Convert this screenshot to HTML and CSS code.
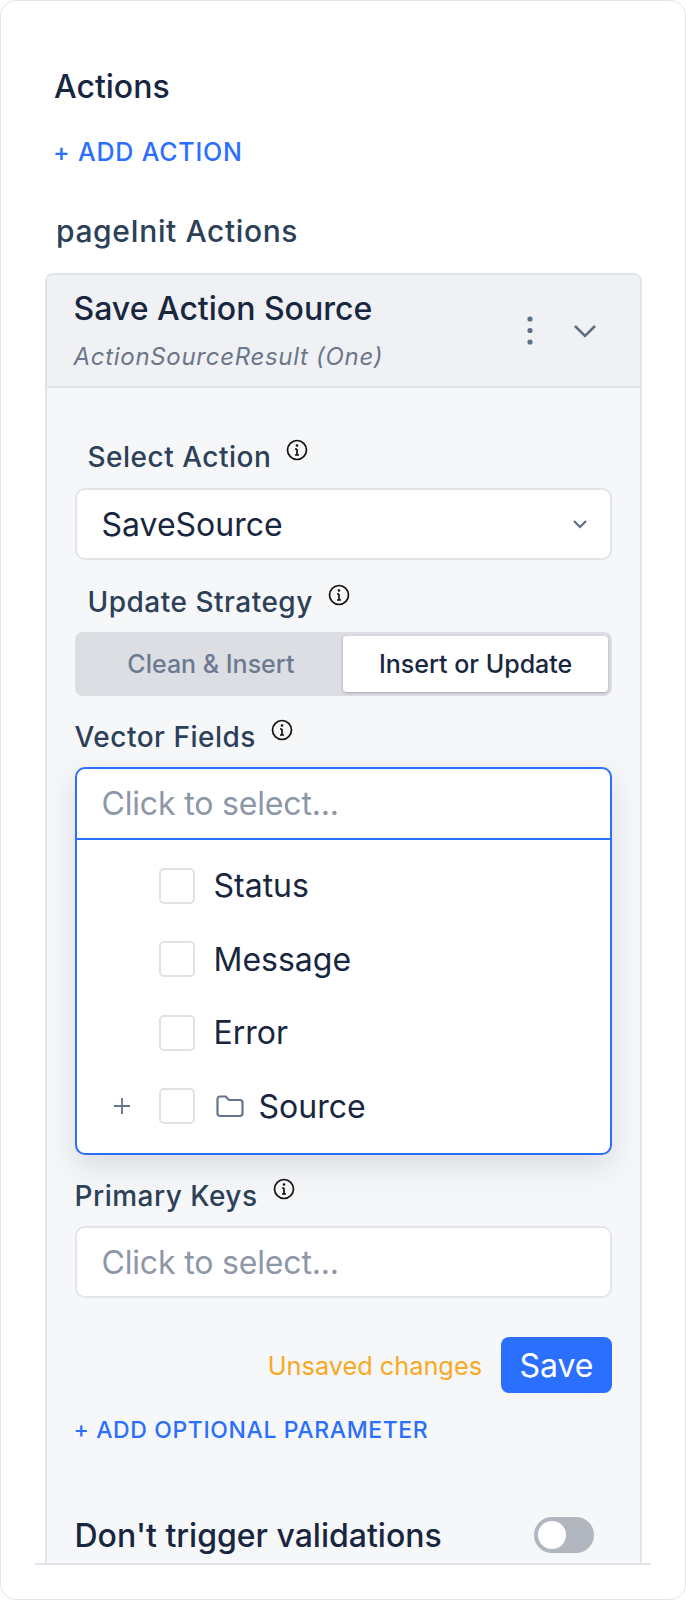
FILE: index.html
```html
<!DOCTYPE html>
<html lang="en">
<head>
    <meta charset="UTF-8">
    <meta name="viewport" content="width=device-width, initial-scale=1.0">
    <title>Actions</title>
    <link rel="stylesheet" href="styles.css">
</head>
<body>
    <div class="panel">
        <div class="panel-scroll">
            <h2 class="panel-title">Actions</h2>
            <a class="add-action">+ ADD ACTION</a>
            <h3 class="group-title">pageInit Actions</h3>

            <div class="action-card">
                <div class="action-header">
                    <div class="action-heading">
                        <div class="action-name">Save Action Source</div>
                        <div class="action-type">ActionSourceResult (One)</div>
                    </div>
                    <svg class="icon-kebab" width="8" height="32" viewBox="0 0 8 32">
                        <circle cx="4" cy="4" r="2.6"/>
                        <circle cx="4" cy="15.500" r="2.6"/>
                        <circle cx="4" cy="27" r="2.6"/>
                    </svg>
                    <svg class="icon-chevron" width="24" height="14" viewBox="0 0 24 14">
                        <path d="M2 2l10 10L22 2"/>
                    </svg>
                </div>

                <div class="action-body">
                    <div class="field-label indented label-select">
                        <span>Select Action</span>
                        <svg class="icon-info" width="22" height="22" viewBox="0 0 22 22">
                            <circle cx="11" cy="11" r="9.500"/>
                            <path d="M11 10v6M9 10h2M9 16h4"/>
                            <circle class="dot" cx="11" cy="6.500" r="1.300"/>
                        </svg>
                    </div>
                    <div class="select-box">
                        <span>SaveSource</span>
                        <svg class="icon-select" width="16" height="10" viewBox="0 0 16 10">
                            <path d="M2 2l6 6 6-6"/>
                        </svg>
                    </div>

                    <div class="field-label indented label-strategy">
                        <span>Update Strategy</span>
                        <svg class="icon-info" width="22" height="22" viewBox="0 0 22 22">
                            <circle cx="11" cy="11" r="9.500"/>
                            <path d="M11 10v6M9 10h2M9 16h4"/>
                            <circle class="dot" cx="11" cy="6.500" r="1.300"/>
                        </svg>
                    </div>
                    <div class="segmented">
                        <div class="segment">Clean &amp; Insert</div>
                        <div class="segment active">Insert or Update</div>
                    </div>

                    <div class="field-label label-vector">
                        <span>Vector Fields</span>
                        <svg class="icon-info" width="22" height="22" viewBox="0 0 22 22">
                            <circle cx="11" cy="11" r="9.500"/>
                            <path d="M11 10v6M9 10h2M9 16h4"/>
                            <circle class="dot" cx="11" cy="6.500" r="1.300"/>
                        </svg>
                    </div>
                    <div class="tree-select">
                        <div class="tree-input">Click to select...</div>
                        <ul class="tree-list">
                            <li class="tree-item">
                                <span class="tree-expander"></span>
                                <span class="checkbox"></span>
                                <span>Status</span>
                            </li>
                            <li class="tree-item">
                                <span class="tree-expander"></span>
                                <span class="checkbox"></span>
                                <span>Message</span>
                            </li>
                            <li class="tree-item">
                                <span class="tree-expander"></span>
                                <span class="checkbox"></span>
                                <span>Error</span>
                            </li>
                            <li class="tree-item">
                                <span class="tree-expander">
                                    <svg width="16" height="16" viewBox="0 0 16 16"><path d="M8 0v16M0 8h16"/></svg>
                                </span>
                                <span class="checkbox"></span>
                                <svg class="icon-folder" width="28" height="23" viewBox="0 0 28 23">
                                    <path d="M1.500 4a2.500 2.500 0 0 1 2.500-2.500h5.500l3.500 3.500h11a2.500 2.500 0 0 1 2.500 2.500v11a2.500 2.500 0 0 1-2.500 2.500H4a2.500 2.500 0 0 1-2.500-2.500z"/>
                                </svg>
                                <span>Source</span>
                            </li>
                        </ul>
                    </div>

                    <div class="field-label label-keys">
                        <span>Primary Keys</span>
                        <svg class="icon-info" width="22" height="22" viewBox="0 0 22 22">
                            <circle cx="11" cy="11" r="9.500"/>
                            <path d="M11 10v6M9 10h2M9 16h4"/>
                            <circle class="dot" cx="11" cy="6.500" r="1.300"/>
                        </svg>
                    </div>
                    <div class="select-box placeholder">Click to select...</div>

                    <div class="save-row">
                        <span class="unsaved">Unsaved changes</span>
                        <button class="save-btn">Save</button>
                    </div>

                    <a class="add-param">+ ADD OPTIONAL PARAMETER</a>

                    <div class="switch-row">
                        <span>Don't trigger validations</span>
                        <span class="switch"><span class="switch-knob"></span></span>
                    </div>
                </div>
            </div>
        </div>
    </div>
</body>
</html>
```

FILE: styles.css
```css
* {
    margin: 0;
    padding: 0;
    box-sizing: border-box;
}

body {
    font-family: Inter, 'Liberation Sans', sans-serif;
    background: #fff;
    color: #18263f;
}

.panel {
    width: 686px;
    height: 1600px;
    padding: 0 34px;
    background: #fff;
    border: 1px solid #e2e5ea;
    border-radius: 16px;
}

.panel-scroll {
    height: 1564px;
    border-bottom: 2px solid #e1e4ea;
    overflow: hidden;
}

.panel-title {
    margin: 66px 0 0 19px;
    font-size: 32px;
    line-height: 40px;
    font-weight: 500;
}

.add-action {
    display: block;
    margin: 30px 0 0 18px;
    font-size: 25px;
    line-height: 30px;
    font-weight: 500;
    letter-spacing: 0.8px;
    color: #2b6fff;
}

.group-title {
    margin: 46px 0 0 21px;
    font-size: 30px;
    line-height: 36px;
    font-weight: 500;
    letter-spacing: 0.6px;
    color: #2c4058;
}

.action-card {
    margin: 24px 0 0 9.500px;
    width: 597.500px;
    height: 1400px;
    background: #f6f7f9;
    border: 2px solid #e1e4ea;
    border-radius: 8px 8px 0 0;
}

.action-header {
    display: flex;
    align-items: center;
    height: 113px;
    padding: 0 43px 0 27px;
    background: #f0f1f4;
    border-bottom: 2px solid #e1e4ea;
    border-radius: 6px 6px 0 0;
}

.action-heading {
    flex: 1;
    padding-top: 1px;
}

.action-name {
    font-size: 32px;
    line-height: 36px;
    font-weight: 500;
}

.action-type {
    margin-top: 15px;
    font-size: 24px;
    line-height: 30px;
    font-style: italic;
    letter-spacing: 0.7px;
    color: #6b7688;
}

.icon-kebab {
    margin-right: 39px;
    fill: #5f6f85;
}

.icon-chevron {
    fill: none;
    stroke: #5f6f85;
    stroke-width: 2.600;
}

.action-body {
    padding: 0 28px;
}

.field-label {
    display: flex;
    align-items: flex-start;
    gap: 15px;
    font-size: 28px;
    line-height: 34px;
    font-weight: 500;
    letter-spacing: 0.5px;
    color: #2c4058;
}

.field-label.indented {
    padding-left: 13px;
}

.label-select {
    margin: 52px 0 14px;
}

.label-strategy {
    margin: 25px 0 13px;
}

.label-vector {
    margin: 24px 0 13px;
}

.label-keys {
    margin: 24px 0 13px;
}

.icon-info {
    margin-top: -1px;
    flex: none;
    fill: none;
    stroke: #111;
    stroke-width: 1.700;
}

.icon-info .dot {
    fill: #111;
    stroke: none;
}

.select-box {
    display: flex;
    align-items: center;
    justify-content: space-between;
    height: 72px;
    padding: 0 22px 0 25px;
    background: #fff;
    border: 2px solid #e2e5ea;
    border-radius: 10px;
    font-size: 32px;
}

.select-box.placeholder {
    letter-spacing: -0.170px;
    color: #8d97a8;
}

.icon-select {
    fill: none;
    stroke: #5f6f85;
    stroke-width: 2.200;
}

.segmented {
    display: flex;
    height: 64px;
    padding: 4px;
    background: #dcdee3;
    border-radius: 8px;
    font-size: 25px;
    font-weight: 500;
}

.segment {
    flex: 1;
    display: flex;
    align-items: center;
    justify-content: center;
    color: #6b7a90;
}

.segment.active {
    background: #fff;
    color: #18263f;
    border-radius: 4px;
    box-shadow: 0 1px 3px rgba(0, 0, 0, 0.25);
}

.tree-select {
    background: #fff;
    border: 2px solid #2b6fff;
    border-radius: 10px;
    box-shadow: 0 12px 30px rgba(30, 40, 70, 0.13);
}

.tree-input {
    height: 71px;
    padding-left: 25px;
    border-bottom: 2px solid #2b6fff;
    font-size: 32px;
    line-height: 69px;
    letter-spacing: -0.170px;
    color: #8d97a8;
}

.tree-list {
    list-style: none;
    padding: 27.500px 0 29px;
}

.tree-item {
    display: flex;
    align-items: center;
    height: 36px;
    padding-left: 37px;
    font-size: 32px;
}

.tree-item + .tree-item {
    margin-top: 37.500px;
}

.tree-expander {
    display: flex;
    align-items: center;
    width: 45px;
    stroke: #64748b;
    stroke-width: 1.800;
}

.checkbox {
    width: 36px;
    height: 36px;
    margin-right: 19px;
    border: 2px solid #dfe1e5;
    border-radius: 5px;
    background: #fff;
}

.icon-folder {
    margin: 0 15px 0 2px;
    fill: none;
    stroke: #64748b;
    stroke-width: 2.200;
}

.save-row {
    display: flex;
    align-items: center;
    justify-content: flex-end;
    gap: 19px;
    margin-top: 39px;
}

.unsaved {
    font-size: 25.300px;
    color: #f9a825;
}

.save-btn {
    width: 111px;
    height: 56px;
    background: #2b6fff;
    border: none;
    border-radius: 8px;
    font-family: inherit;
    font-size: 32px;
    color: #fff;
}

.add-param {
    display: block;
    margin: 23px 0 0 -1px;
    font-size: 23px;
    line-height: 28px;
    font-weight: 500;
    letter-spacing: 0.6px;
    color: #2b6fff;
}

.switch-row {
    display: flex;
    align-items: center;
    justify-content: space-between;
    height: 36px;
    margin-top: 73px;
    padding-right: 18px;
    font-size: 32px;
    font-weight: 500;
}

.switch {
    display: flex;
    align-items: center;
    width: 60px;
    height: 36px;
    padding: 0 4px;
    background: #b1b6bf;
    border-radius: 18px;
}

.switch-knob {
    width: 28px;
    height: 28px;
    background: #fff;
    border-radius: 50%;
}
```
